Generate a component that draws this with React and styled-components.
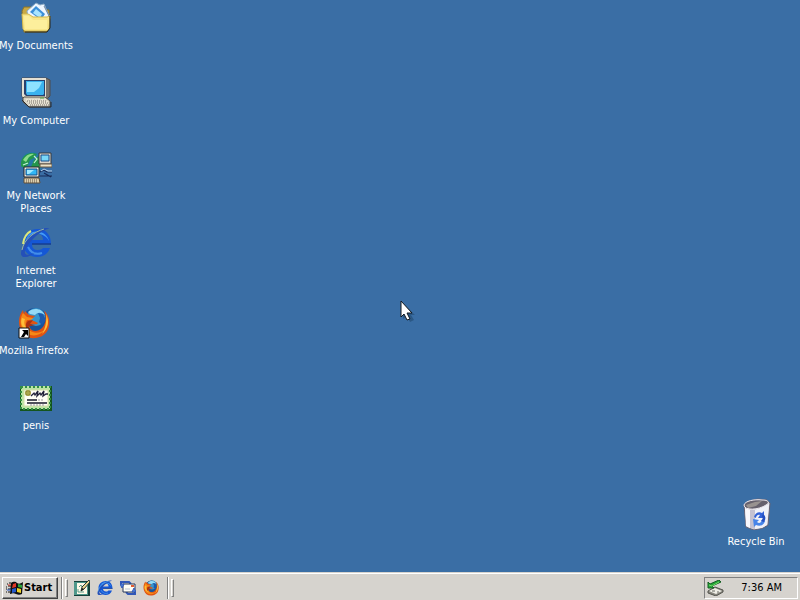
import React from 'react';
import styled, { createGlobalStyle } from 'styled-components';

const GlobalStyle = createGlobalStyle`
  *, *::before, *::after { box-sizing: border-box; }
  body {
    margin: 0;
    background: #3a6ea5;
    font-family: Tahoma, "DejaVu Sans Condensed", "Noto Sans", sans-serif;
    font-size: 11px;
    line-height: 13px;
  }
`;

const Screen = styled.div`
  display: flex;
  flex-direction: column;
  min-height: 100vh;
`;

const Desktop = styled.main`
  position: relative;
  flex: 1;
  display: flex;
  justify-content: space-between;
`;

const IconColumn = styled.div`
  display: flex;
  flex-direction: column;
  justify-content: ${(p) => (p.$end ? 'flex-end' : 'flex-start')};
  padding: ${(p) => (p.$end ? '0 8px 1px 0' : '0')};
`;

const Shortcut = styled.button`
  display: flex;
  flex-direction: column;
  align-items: center;
  gap: 5px;
  width: ${(p) => (p.$loose ? '68px' : '72px')};
  height: 75px;
  margin-top: ${(p) => (p.$loose ? '5px' : '0')};
  padding: 2px 0 0;
  border: 0;
  background: transparent;
  color: #fff;
  font: inherit;

  svg { flex: none; }
`;

const Label = styled.span`
  display: block;
  text-align: center;
  white-space: pre;
`;

const Pointer = styled.svg`
  position: absolute;
  left: 50%;
  top: 300px;
  pointer-events: none;
`;

const Taskbar = styled.footer`
  display: flex;
  align-items: center;
  height: 28px;
  padding: 2px 2px 0;
  background: #d6d3ce;
  border-top: 1px solid #d6d3ce;
  box-shadow: inset 0 1px 0 #fff;
`;

const StartButton = styled.button`
  display: flex;
  align-items: center;
  gap: 1px;
  width: 56px;
  height: 22px;
  padding: 0 0 0 3px;
  border: 1px solid;
  border-color: #fff #404040 #404040 #fff;
  box-shadow: inset -1px -1px 0 #808080;
  background: #d6d3ce;
  color: #000;
  font: inherit;
  font-weight: bold;
`;

const Grip = styled.span`
  display: flex;
  align-items: center;
  gap: 2px;
  height: 22px;
  margin-left: ${(p) => (p.$wide ? '8px' : '3px')};

  &::before {
    content: '';
    width: 2px;
    height: 22px;
    border-left: 1px solid #808080;
    border-right: 1px solid #fff;
  }
  &::after {
    content: '';
    width: 3px;
    height: 18px;
    border: 1px solid;
    border-color: #fff #808080 #808080 #fff;
    background: #d6d3ce;
  }
`;

const QuickLaunch = styled.nav`
  display: flex;
  gap: 7px;
  margin-left: 6px;
`;

const QuickButton = styled.button`
  display: flex;
  width: 16px;
  height: 16px;
  padding: 0;
  border: 0;
  background: transparent;
`;

const Tray = styled.div`
  display: flex;
  align-items: center;
  justify-content: space-between;
  width: 94px;
  height: 22px;
  margin-left: auto;
  padding: 0 15px 0 2px;
  border: 1px solid;
  border-color: #808080 #fff #fff #808080;
`;

const DocumentsIcon = () => (
  <svg width="32" height="32" viewBox="0 0 32 32" aria-hidden="true">
    <path d="M2 9l2-4h7l2 3h16v19l-3 3H4z" fill="#c9a944" stroke="#8b7428" />
    <path d="M7 9L16 1l4 2 4-1 6 14-3 6H9z" fill="#eef6ff" stroke="#8ba9c4" />
    <path d="M10 10l6-6 9 8-4 6z" fill="#3b8fd8" />
    <path d="M13 11l3-4 6 5-2 4z" fill="#a8e4ff" />
    <path d="M24 4l6 12" stroke="#6f87a2" />
    <path d="M2 12h6l2 1 3 2h14l3-1-1 13-2 2H5l-2-2z" fill="#f8e68a" stroke="#d4b84c" />
    <path d="M4 14h5l4 4h14v9H5z" fill="#fff2a4" opacity=".7" />
    <path d="M5 30h22l3-4V14" fill="none" stroke="#24221a" />
  </svg>
);

const ComputerIcon = () => (
  <svg width="32" height="32" viewBox="0 0 32 32" aria-hidden="true">
    <path d="M2 1h24l4 2v16l-4 4H4l-2-4z" fill="#77736f" stroke="#4d4b4d" />
    <path d="M2 1h24v19l-2 2H4l-2-3z" fill="#e4dfd2" />
    <path d="M4 3h21v16H6l-2-2z" fill="#27416f" />
    <path d="M6 4h18v13l-1 1H7l-1-2z" fill="#3bb2ee" />
    <path d="M7 5h15l-3 6-5 4H7z" fill="#8ee2ff" />
    <path d="M4 20h21l5 4v6H9l-6-5v-4z" fill="#d8d3c4" stroke="#56524a" />
    <path d="M6 23h20M8 25h21M9 27h20" stroke="#fff8e6" strokeDasharray="2 1" />
    <path d="M7 24h20M9 26h20M10 28h20" stroke="#756f68" strokeDasharray="1 1" />
    <path d="M2 23l7 7h22v-5" fill="none" stroke="#292a30" />
    <path d="M20 21h4" stroke="#50a840" />
  </svg>
);

const NetworkIcon = () => (
  <svg width="32" height="32" viewBox="0 0 32 32" aria-hidden="true">
    <circle cx="12" cy="11" r="11" fill="#2479a8" />
    <path d="M1 10C3 3 9-1 17 2l-3 4-4 2-2 5-4 3-3-2zm10 5l3-7 5-4 4 6-4 8-7 5-3-2z" fill="#23964b" />
    <path d="M3 8c3-5 7-7 11-6l-5 3-3 5z" fill="#8bdc8a" />
    <path d="M14 4l3 3-3 4M3 13l5-2" fill="none" stroke="#c3f1dc" strokeWidth="1.2" />
    <path d="M19 1h12v11H19z" fill="#d9d5ca" stroke="#373a40" />
    <path d="M21 3h8v6h-8z" fill="#79d8fa" stroke="#174c8b" />
    <path d="M20 12h12v3H20z" fill="#ece3c8" stroke="#685945" />
    <path d="M4 15h15v10H4z" fill="#f0eee4" stroke="#24252a" />
    <path d="M6 17h11v6H6z" fill="#31b6f4" stroke="#15508b" />
    <path d="M7 18h7l-5 4H7z" fill="#a1e9ff" />
    <path d="M4 26h15l1 5H4z" fill="#ddd0ae" stroke="#604e39" />
    <path d="M6 28h12M6 30h12" stroke="#5c4c41" strokeDasharray="1 1" />
    <path d="M20 20l4-2 3 2h5M20 24h12M24 21l7 4" fill="none" stroke="#172b59" strokeWidth="1.2" />
    <path d="M21 19l3-2 4 2h4" fill="none" stroke="#b8d8f4" />
  </svg>
);

const ExplorerIcon = ({ size = 32 }) => (
  <svg width={size} height={size} viewBox="0 0 32 32" aria-hidden="true">
    <path fillRule="evenodd" d="M31 17H12c0 4 2 6 6 6 3 0 4-1 5-2h7c-2 6-7 9-13 9C9 30 3 24 3 16 3 8 9 2 18 2c8 0 13 6 13 15zM12 13h11c0-4-2-6-5-6s-6 2-6 6z" fill="#1557d5" />
    <path d="M6 13C8 6 14 3 20 5c5 1 8 5 9 9-2-4-5-6-9-7-6-2-10 0-14 6z" fill="#439cf6" />
    <path d="M8 20c3 6 8 8 14 6" fill="none" stroke="#438ee9" strokeWidth="2" />
    <path d="M30 2C23-2 10 8 5 16 0 24-1 31 6 30c3 0 7-3 10-5-6 3-10 4-11 1-1-4 4-10 10-16 7-6 13-9 15-8z" fill="#2450b8" />
    <path d="M2 23C4 12 14 5 24 2" fill="none" stroke={size > 20 ? '#9bb9a0' : '#65c9ff'} />
    {size > 20 && <path d="M3 17C4 10 7 6 11 4" fill="none" stroke="#dce778" strokeWidth="2" />}
    <path d="M12 17h19" stroke="#143d91" strokeWidth="1.5" />
  </svg>
);

const FirefoxIcon = ({ size = 32, shortcut = false }) => (
  <svg width={size} height={size} viewBox="0 0 32 32" aria-hidden="true">
    <circle cx="17" cy="14" r="13" fill="#195399" />
    <circle cx="18" cy="10" r="9" fill="#3695cd" />
    <path d="M10 5c5-5 14-4 17 3-5-3-7-3-10 0l-5-1z" fill="#95d9f5" />
    <path d="M20 6l5 1 3 6-4 5-3-3 1-4z" fill="#1c5aad" />
    <path d="M5 3C1 8 0 15 2 21c2 7 8 11 16 10 9-1 15-8 13-19-1-4-3-7-5-8 3 6 2 13-2 17-4 4-10 4-12 0-2-2 0-4 3-4 2 0 4 1 5-1l-4-2-4-1c1-2 4-2 5-4l-6-1-4-4-1 3z" fill="#e05312" />
    <path d="M4 8c-3 7-1 14 4 18 6 4 14 3 19-3-5 3-11 4-16 0-4-3-4-7-2-10 3 0 5 0 6-2l-6-1-4-4z" fill="#f58918" />
    <path d="M28 7c4 7 2 15-4 20 3-5 5-12 4-20z" fill="#ffbd35" />
    <path d="M4 11c-2 5 0 9 4 12l5 2c-6-4-8-8-6-13z" fill="#ffbf39" />
    <path d="M10 14l5-1-3 4 5 1-4 1c-2 0-4 1-4 3-2-3-1-6 1-8z" fill="#a93212" />
    {shortcut && (
      <g>
        <path d="M1 21h10v10H1z" fill="#fff" stroke="#101010" />
        <path d="M4 23h6v6l-2-2-2 3H3l3-5z" fill="#000" />
      </g>
    )}
  </svg>
);

const CertificateIcon = () => (
  <svg width="32" height="32" viewBox="0 0 32 32" aria-hidden="true">
    <path d="M0 4h32v25H0z" fill="#14551e" />
    <path d="M1 4h29v23H1z" fill="#bce5a4" />
    <path d="M1 5h29v22H1z" fill="none" stroke="#348e43" strokeWidth="2" strokeDasharray="2 2" />
    <path d="M4 8h24v16H4z" fill="#fffef5" stroke="#d4dfa9" />
    <circle cx="8" cy="11" r="3" fill="#918933" />
    <path d="M5 11h6M8 8v6" stroke="#b4b156" />
    <path d="M11 14l3-3 1 2 3-4-1 5 3-3 1 2 3-4-1 5 3-2h2" fill="none" stroke="#202039" strokeWidth="1.3" />
    <path d="M7 18h10M7 21h20" stroke="#171728" strokeWidth="1.5" />
    <path d="M18 18h6M10 23h14" stroke="#9999a3" strokeDasharray="2 1" />
  </svg>
);

const RecycleIcon = () => (
  <svg width="32" height="32" viewBox="0 0 32 32" aria-hidden="true">
    <path d="M4 7l5-4 9-2 9 1 3 3-2 22-5 3-9 2-8-3z" fill="#d7d6de" stroke="#656273" />
    <path d="M5 10l5 2v18l-4-2z" fill="#f8f7fc" />
    <path d="M15 12l14-6-2 21-5 3-7 1z" fill="#f0f1f8" />
    <path d="M10 12h5v19l-5-1z" fill="#c5c2d1" />
    <path d="M4 7c1-4 10-6 18-5 7 0 8 3 4 5-7 5-22 6-22 0z" fill="#66616d" stroke="#eeeaf0" />
    <path d="M6 7l9-3 7-1-6 5-8 2z" fill="#989290" />
    <path d="M14 19c1-4 5-6 8-4l2-2v7h-6l2-3c-2-1-4 1-4 3z" fill="#3262d8" />
    <path d="M13 21l6 1-2 2c2 2 4 1 5-2l3 1c-1 4-5 6-9 4l-2 2z" fill="#4784e8" />
    <path d="M23 16c3 2 3 5 1 8l-3-1c2-2 2-3 1-5z" fill="#244ebf" />
  </svg>
);

const WindowsFlag = () => (
  <svg width="17" height="16" viewBox="0 0 17 16" aria-hidden="true">
    <path d="M5 3c3-2 5-1 6 0 2 1 3 1 6-1l-1 12c-2 1-4 1-6 0-2-1-3-1-6 0z" fill="#101010" />
    <path d="M7 4l3-1v4l-4 1z" fill="#e13726" />
    <path d="M12 4l4 1v3l-4-1z" fill="#2ba43c" />
    <path d="M6 9l4-1v4l-4 1z" fill="#2459cc" />
    <path d="M11 8l4 1v4l-4-1z" fill="#efd22c" />
    <path d="M1 4h1M3 3h2M0 7h1M2 6h3M0 9h1M2 9h3M0 12h1M2 12h2" stroke="#101010" />
    <path d="M2 5h3" stroke="#e13726" />
    <path d="M1 10h4" stroke="#2459cc" />
  </svg>
);

const ShowDesktopIcon = () => (
  <svg width="16" height="16" viewBox="0 0 16 16" aria-hidden="true">
    <path d="M0 1h16v15H0z" fill="#143e38" />
    <path d="M0 2h14v13H0z" fill="#4f988b" />
    <path d="M3 3h10v11H3z" fill="#fff9e8" />
    <path d="M5 7l2-2 1 2M4 9v3h6" fill="none" stroke="#579a87" />
    <path d="M7 11l1-4 7-7 1 2-6 7z" fill="#ecd58f" stroke="#243a35" />
    <path d="M7 11l1-3 2 1z" fill="#111" />
  </svg>
);

const MailIcon = () => (
  <svg width="16" height="16" viewBox="0 0 16 16" aria-hidden="true">
    <path d="M1 5V2h8l2 2M15 11v3H8l-2-2" fill="none" stroke="#3258b8" strokeWidth="2" />
    <path d="M3 4h12v8H3z" fill="#fffdf4" stroke="#26375b" />
    <path d="M5 9h5" stroke="#bdc4d4" />
    <path d="M11 5h3v2h-3z" fill="#e45b31" />
    <path d="M0 4h4L2 8zM12 12h4l-2-4z" fill="#5184df" stroke="#3258b8" />
  </svg>
);

const UnplugIcon = () => (
  <svg width="17" height="16" viewBox="0 0 17 16" aria-hidden="true">
    <path d="M1 11l7-4 8 3v2l-7 4-8-3z" fill="#88867e" stroke="#55554f" />
    <path d="M2 11l6-3 7 3-6 3z" fill="#efeee6" />
    <path d="M5 11h3M10 12h2" stroke="#696963" />
    <path d="M1 2v6h6L5 6l9-4-2-2-9 4z" fill="#24a638" stroke="#125c20" />
    <path d="M2 5l3 1 7-4" fill="none" stroke="#70dd68" />
  </svg>
);

const shortcuts = [
  { label: 'My Documents', Icon: DocumentsIcon },
  { label: 'My Computer', Icon: ComputerIcon },
  { label: 'My Network\nPlaces', Icon: NetworkIcon },
  { label: 'Internet\nExplorer', Icon: ExplorerIcon },
  { label: 'Mozilla Firefox', Icon: FirefoxIcon, loose: true },
  { label: 'penis', Icon: CertificateIcon },
];

export default function App() {
  return (
    <Screen>
      <GlobalStyle />
      <Desktop>
        <IconColumn>
          {shortcuts.map(({ label, Icon, loose }) => (
            <Shortcut key={label} type="button" $loose={loose}>
              <Icon {...(loose ? { shortcut: true } : {})} />
              <Label>{label}</Label>
            </Shortcut>
          ))}
        </IconColumn>
        <IconColumn $end>
          <Shortcut type="button">
            <RecycleIcon />
            <Label>Recycle Bin</Label>
          </Shortcut>
        </IconColumn>
        <Pointer width="18" height="24" viewBox="0 0 18 24" aria-hidden="true">
          <path d="M3 4v15l4-3 3 6 4-2-3-5h4z" fill="#163654" opacity=".4" />
          <path d="M1 1v16l3-3 3 6 3-1-3-6h5z" fill="#fff" stroke="#101820" />
        </Pointer>
      </Desktop>
      <Taskbar>
        <StartButton type="button">
          <WindowsFlag />
          Start
        </StartButton>
        <Grip />
        <QuickLaunch aria-label="Quick Launch">
          <QuickButton type="button" aria-label="Show Desktop"><ShowDesktopIcon /></QuickButton>
          <QuickButton type="button" aria-label="Internet Explorer"><ExplorerIcon size={16} /></QuickButton>
          <QuickButton type="button" aria-label="Outlook Express"><MailIcon /></QuickButton>
          <QuickButton type="button" aria-label="Mozilla Firefox"><FirefoxIcon size={16} /></QuickButton>
        </QuickLaunch>
        <Grip $wide />
        <Tray>
          <UnplugIcon />
          <time>7:36 AM</time>
        </Tray>
      </Taskbar>
    </Screen>
  );
}
